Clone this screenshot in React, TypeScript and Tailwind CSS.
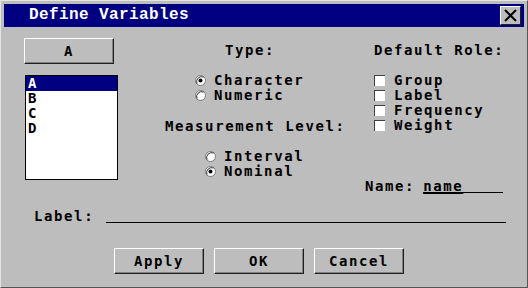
import React from 'react';

const mono = { fontFamily: '"DejaVu Sans Mono", monospace' };

const Radio: React.FC<{ on?: boolean; label: string }> = ({ on, label }) => (
  <div className="flex items-center h-[15px]">
    <svg width="11" height="11" viewBox="0 0 11 11" className="shrink-0">
      <circle cx="5.5" cy="5.5" r="5" fill="#ffffff" stroke="#7a7a7a" strokeWidth="1" />
      <path d="M2 8.5 A5 5 0 0 1 8.5 2" fill="none" stroke="#333333" strokeWidth="1" />
      {on && <circle cx="5.5" cy="5.5" r="2" fill="#000000" />}
    </svg>
    <span className="ml-[8px]">{label}</span>
  </div>
);

const Check: React.FC<{ label: string }> = ({ label }) => (
  <div className="flex items-center h-[15px]">
    <span className="w-[11px] h-[11px] bg-white border-t border-l border-[#404040] border-b-[#e8e8e8] border-r-[#e8e8e8] shrink-0" />
    <span className="ml-[9px]">{label}</span>
  </div>
);

const Btn: React.FC<{ label: string }> = ({ label }) => (
  <button className="w-[90px] h-[26px] bg-[#bdbdbd] border border-t-white border-l-white border-b-[#202020] border-r-[#202020] shadow-[inset_-1px_-1px_0_#808080] flex items-center justify-center text-black">
    {label}
  </button>
);

export default function App() {
  return (
    <div
      className="w-[528px] h-[288px] bg-[#bdbdbd] border border-t-[#e4e4e4] border-l-[#e4e4e4] border-b-[#555555] border-r-[#555555] flex flex-col text-black font-bold text-[14px] leading-[15px] tracking-[1.6px] overflow-hidden"
      style={mono}
    >
      {/* title bar */}
      <div className="mx-[3px] mt-[3px] h-[23px] bg-[#000080] flex items-center justify-between">
        <span
          className="pl-[25px] text-white text-[16px] tracking-[0.4px] font-bold"
          style={{ fontFamily: '"Liberation Mono", monospace' }}
        >
          Define Variables
        </span>
        <div className="mr-[3px] w-[21px] h-[19px] bg-[#bdbdbd] border border-t-white border-l-white border-b-[#202020] border-r-[#202020] flex items-center justify-center">
          <svg width="13" height="13" viewBox="0 0 13 13">
            <path d="M1 1 L12 12 M12 1 L1 12" stroke="#000000" strokeWidth="2" />
          </svg>
        </div>
      </div>

      {/* main area */}
      <div className="flex items-start mt-[11px]">
        <div className="ml-[23px] w-[95px] flex flex-col">
          <Btn label="A" />
          <div className="mt-[11px] ml-px w-[93px] h-[105px] bg-white border border-black flex flex-col">
            <div className="h-[15px] bg-[#000080] text-white pl-[2px]">A</div>
            <div className="h-[15px] pl-[2px]">B</div>
            <div className="h-[15px] pl-[2px]">C</div>
            <div className="h-[15px] pl-[2px]">D</div>
          </div>
        </div>

        <div className="ml-[41px] w-[190px] flex flex-col">
          <div className="mt-[5px] h-[15px] pl-[65px]">Type:</div>
          <div className="mt-[15px] pl-[35px] flex flex-col">
            <Radio on label="Character" />
            <Radio label="Numeric" />
          </div>
          <div className="mt-[16px] h-[15px] pl-[5px]">Measurement Level:</div>
          <div className="mt-[15px] pl-[45px] flex flex-col">
            <Radio label="Interval" />
            <Radio on label="Nominal" />
          </div>
        </div>

        <div className="ml-[15px] w-[140px] flex flex-col">
          <div className="mt-[5px] h-[15px] pl-[9px]">Default Role:</div>
          <div className="mt-[15px] pl-[9px] flex flex-col">
            <Check label="Group" />
            <Check label="Label" />
            <Check label="Frequency" />
            <Check label="Weight" />
          </div>
          <div className="mt-[46px] h-[15px] flex items-start">
            <span>Name:</span>
            <span className="ml-[8px] w-[80px] h-[14px] border-b border-black">
              <span className="underline underline-offset-[2px]">name</span>
            </span>
          </div>
        </div>
      </div>

      {/* label row */}
      <div className="mt-[15px] ml-[33px] h-[15px] flex items-start">
        <span>Label:</span>
        <span className="ml-[12px] w-[400px] h-[14px] border-b border-black" />
      </div>

      {/* buttons */}
      <div className="mt-[24px] ml-[113px] flex gap-[10px]">
        <Btn label="Apply" />
        <Btn label="OK" />
        <Btn label="Cancel" />
      </div>
    </div>
  );
}
